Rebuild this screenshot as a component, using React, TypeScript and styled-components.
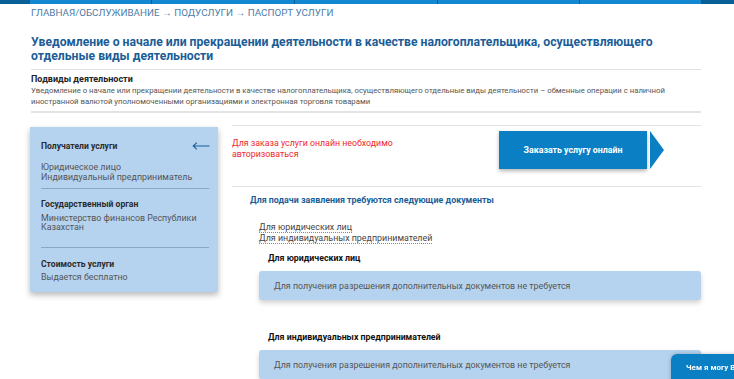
import React from "react";
import styled, { createGlobalStyle } from "styled-components";

const Global = createGlobalStyle`
  html, body { margin: 0; padding: 0; background: #fff; }
  body { font-family: Roboto, "Noto Sans", Arial, sans-serif; color: #333; overflow: hidden; }
  * { box-sizing: border-box; }
`;

const TopBar = styled.div`
  display: flex;
  height: 4px;
  background: #1387cf;
`;
const BarSeg = styled.div<{ $w: number; $dark?: boolean }>`
  width: ${(p) => p.$w}px;
  flex: none;
  background: ${(p) => (p.$dark ? "#0b5f97" : "#1387cf")};
  border-right: ${(p) => (p.$dark ? "none" : "1px solid #0d5b8e")};
`;
const BarFill = styled.div`
  flex: 1;
  background: #0b5f97;
`;

const Page = styled.div`
  padding: 0 33px 0 31px;
`;

const Crumbs = styled.div`
  margin-top: 3px;
  font-size: 9.8px;
  line-height: 12px;
  color: #4d7ca8;
  text-transform: uppercase;
`;

const Title = styled.h1`
  margin: 16px 0 0;
  font-size: 12.2px;
  line-height: 14px;
  font-weight: 700;
  color: #1b5d97;
  padding-bottom: 6px;
  border-bottom: 1px solid #e0e0e0;
`;

const Sub = styled.div`
  padding: 3px 0 4px;
  border-bottom: 2px solid #e3e3e3;
`;
const SubHead = styled.div`
  font-size: 9px;
  line-height: 12px;
  font-weight: 700;
  color: #222;
`;
const SubText = styled.div`
  font-size: 7.75px;
  line-height: 11px;
  color: #555;
`;

const Main = styled.div`
  display: grid;
  grid-template-columns: 188px 1fr;
  column-gap: 14px;
  margin-top: 12px;
  margin-left: -1px;
`;

const Side = styled.aside`
  align-self: start;
  margin-top: 2px;
  background: #b5d3ef;
  box-shadow: 0 3px 6px rgba(0, 0, 0, 0.28);
  padding: 13px 9px 10px 11px;
`;
const SideBlock = styled.div<{ $pb?: number; $mb?: number }>`
  padding-bottom: ${(p) => p.$pb ?? 0}px;
  margin-bottom: ${(p) => p.$mb ?? 0}px;
  border-bottom: ${(p) => (p.$mb ? "1px solid #8ea6bd" : "none")};
`;
const SideHead = styled.div<{ $gap: number }>`
  display: flex;
  align-items: center;
  justify-content: space-between;
  font-size: 8.6px;
  line-height: 12px;
  font-weight: 700;
  color: #2b2b2b;
  margin-bottom: ${(p) => p.$gap}px;
`;
const SideText = styled.div`
  font-size: 8.9px;
  line-height: 9.5px;
  color: #555;
`;
const Arrow = styled.svg`
  width: 18px;
  height: 8px;
  margin-right: -1px;
`;

const Right = styled.div`
  display: flex;
  flex-direction: column;
`;

const OrderRow = styled.div`
  display: flex;
  justify-content: space-between;
  align-items: flex-start;
  border-top: 1px solid #e3e3e3;
  border-bottom: 1px solid #e3e3e3;
  padding: 5px 37px 17px 0;
`;
const Warn = styled.div`
  margin-top: 7px;
  font-size: 8.8px;
  line-height: 11px;
  color: #f02828;
  width: 200px;
`;
const OrderWrap = styled.div`
  display: flex;
  align-items: stretch;
  gap: 3px;
`;
const OrderBtn = styled.button`
  width: 148px;
  height: 38px;
  border: none;
  background: #0a7fc4;
  color: #fff;
  font-family: inherit;
  font-size: 8.8px;
  font-weight: 700;
  box-shadow: 0 2px 4px rgba(0, 0, 0, 0.3);
  cursor: pointer;
`;
const Tri = styled.div`
  width: 0;
  height: 0;
  border-top: 19px solid transparent;
  border-bottom: 19px solid transparent;
  border-left: 14px solid #0a7fc4;
`;

const DocsHead = styled.div`
  margin: 7px 0 0 18px;
  font-size: 8.85px;
  line-height: 12px;
  font-weight: 700;
  color: #1b5d97;
`;
const Links = styled.div`
  display: flex;
  flex-direction: column;
  align-items: flex-start;
  margin: 16px 0 0 27px;
`;
const DocLink = styled.a`
  font-size: 8.9px;
  line-height: 10px;
  color: #444;
  text-decoration: none;
  border-bottom: 1px dotted #888;
`;
const DocTitle = styled.div<{ $top: number }>`
  margin: ${(p) => p.$top}px 0 0 36px;
  font-size: 8.8px;
  line-height: 12px;
  font-weight: 700;
  color: #111;
`;
const DocBox = styled.div`
  margin: 7px 0 0 27px;
  height: 29px;
  display: flex;
  align-items: center;
  padding-left: 15px;
  background: #b5d3ef;
  border-radius: 3px;
  box-shadow: 0 3px 5px rgba(0, 0, 0, 0.18);
  font-size: 8.87px;
  color: #555;
`;

const Chat = styled.div`
  position: fixed;
  left: 671px;
  top: 354px;
  width: 90px;
  height: 30px;
  background: #0a7fc4;
  border-radius: 6px 0 0 0;
  color: #fff;
  font-size: 8px;
  font-weight: 700;
  padding: 9px 0 0 15px;
  white-space: nowrap;
  box-shadow: 0 0 4px rgba(0, 0, 0, 0.25);
`;

export default function App() {
  return (
    <>
      <Global />
      <TopBar>
        <BarSeg $w={30} $dark />
        <BarSeg $w={122} />
        <BarSeg $w={143} />
        <BarSeg $w={143} />
        <BarSeg $w={142} />
        <BarSeg $w={122} />
        <BarFill />
      </TopBar>
      <Page>
        <Crumbs>Главная/Обслуживание → Подуслуги → Паспорт услуги</Crumbs>
        <Title>
          Уведомление о начале или прекращении деятельности в качестве налогоплательщика, осуществляющего
          отдельные виды деятельности
        </Title>
        <Sub>
          <SubHead>Подвиды деятельности</SubHead>
          <SubText>
            Уведомление о начале или прекращении деятельности в качестве налогоплательщика, осуществляющего
            отдельные виды деятельности – обменные операции с наличной иностранной валютой уполномоченными
            организациями и электронная торговля товарами
          </SubText>
        </Sub>
        <Main>
          <Side>
            <SideBlock $pb={5.5} $mb={9}>
              <SideHead $gap={11}>
                Получатели услуги
                <Arrow viewBox="0 0 18 8">
                  <path d="M17.5 4H1.2M4.8 0.6L1.2 4l3.6 3.4" fill="none" stroke="#1b5d97" strokeWidth="1.1" />
                </Arrow>
              </SideHead>
              <SideText>
                Юридическое лицо
                <br />
                Индивидуальный предприниматель
              </SideText>
            </SideBlock>
            <SideBlock $pb={14} $mb={10}>
              <SideHead $gap={4}>Государственный орган</SideHead>
              <SideText>
                Министерство финансов Республики
                <br />
                Казахстан
              </SideText>
            </SideBlock>
            <SideBlock>
              <SideHead $gap={3}>Стоимость услуги</SideHead>
              <SideText>Выдается бесплатно</SideText>
            </SideBlock>
          </Side>
          <Right>
            <OrderRow>
              <Warn>Для заказа услуги онлайн необходимо авторизоваться</Warn>
              <OrderWrap>
                <OrderBtn>Заказать услугу онлайн</OrderBtn>
                <Tri />
              </OrderWrap>
            </OrderRow>
            <DocsHead>Для подачи заявления требуются следующие документы</DocsHead>
            <Links>
              <DocLink href="#">Для юридических лиц</DocLink>
              <DocLink href="#">Для индивидуальных предпринимателей</DocLink>
            </Links>
            <DocTitle $top={8}>Для юридических лиц</DocTitle>
            <DocBox>Для получения разрешения дополнительных документов не требуется</DocBox>
            <DocTitle $top={31}>Для индивидуальных предпринимателей</DocTitle>
            <DocBox>Для получения разрешения дополнительных документов не требуется</DocBox>
          </Right>
        </Main>
      </Page>
      <Chat>Чем я могу Вам помочь?</Chat>
    </>
  );
}
